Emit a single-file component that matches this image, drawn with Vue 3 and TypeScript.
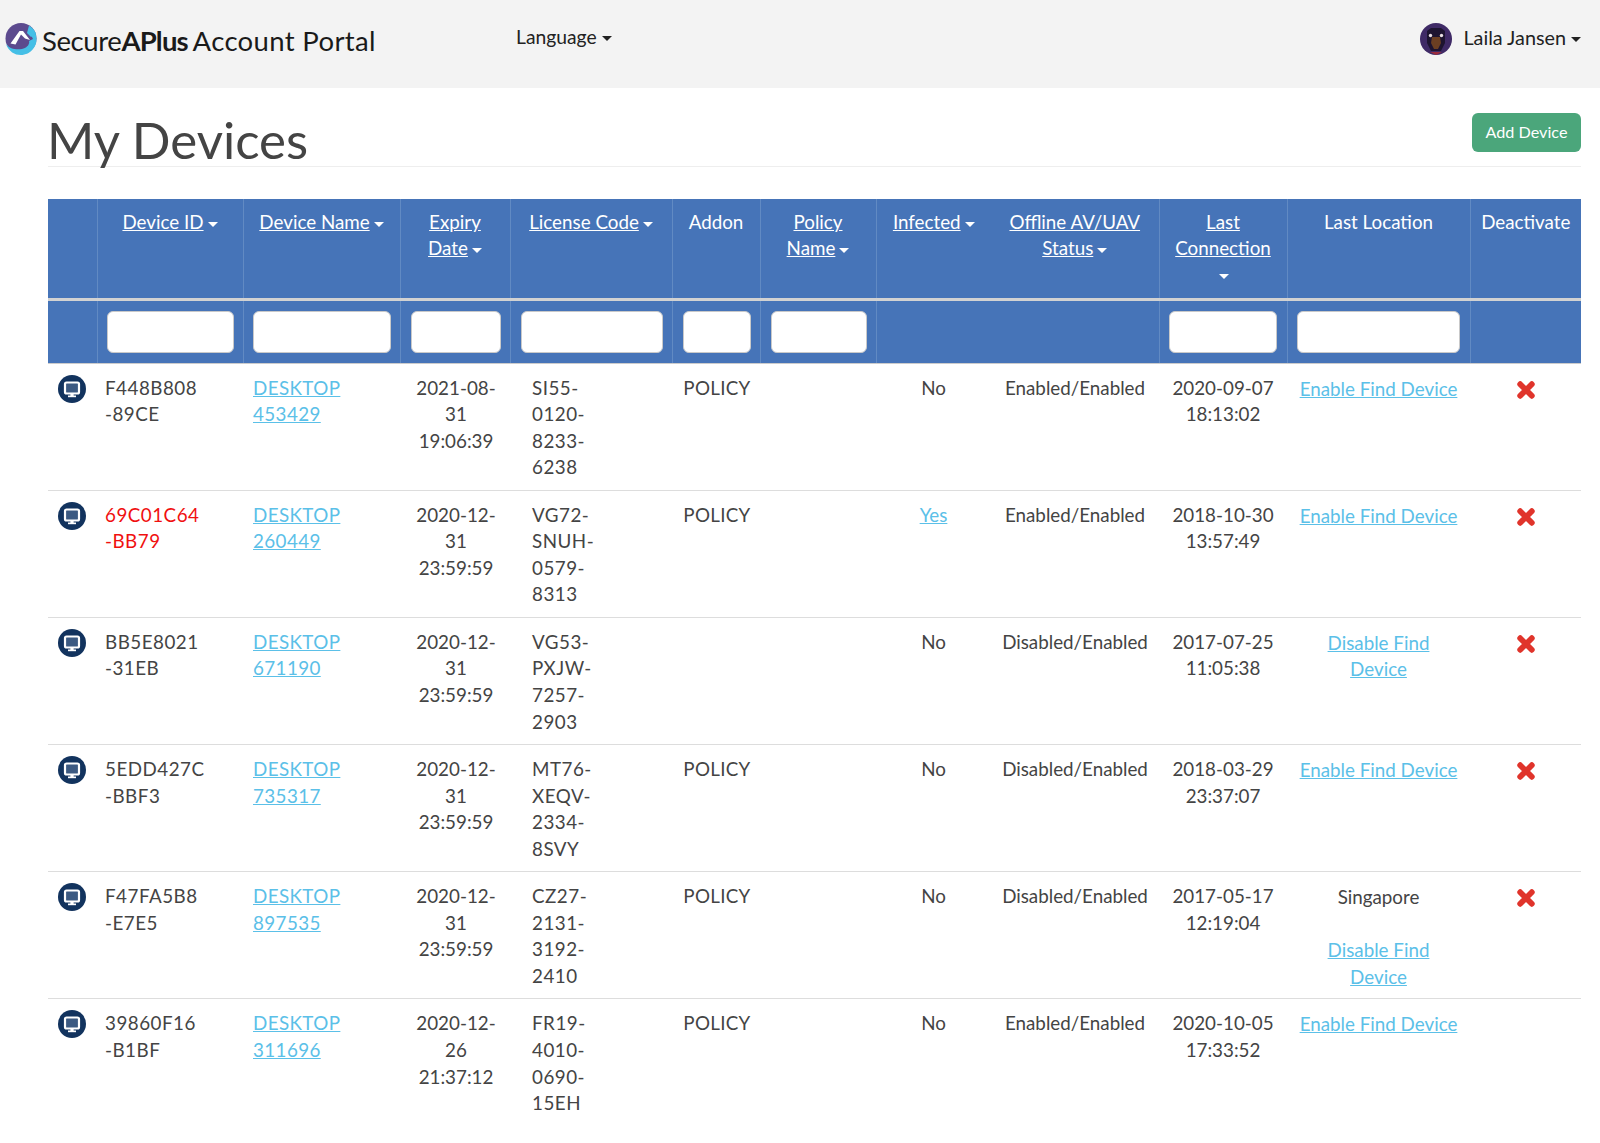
<script setup lang="ts">
interface Col { lines: string[]; sort: boolean; caretBlock?: boolean; width: number; filter: boolean; noLine?: boolean }
interface Row { id: string; red?: boolean; name: string; expiry: string; code: string; addon: string; infected: string; status: string; last: string; city?: string; find: string; canRemove: boolean }

const cols: Col[] = [
  { lines: [], sort: false, width: 49, filter: false, noLine: true },
  { lines: ['Device ID'], sort: true, width: 146, filter: true },
  { lines: ['Device Name'], sort: true, width: 157, filter: true },
  { lines: ['Expiry', 'Date'], sort: true, width: 110, filter: true },
  { lines: ['License Code'], sort: true, width: 162, filter: true },
  { lines: ['Addon'], sort: false, width: 88, filter: true },
  { lines: ['Policy', 'Name'], sort: true, width: 116, filter: true },
  { lines: ['Infected'], sort: true, width: 115, filter: false },
  { lines: ['Offline AV/UAV', 'Status'], sort: true, width: 168, filter: false, noLine: true },
  { lines: ['Last', 'Connection'], sort: true, caretBlock: true, width: 128, filter: true },
  { lines: ['Last Location'], sort: false, width: 183, filter: true },
  { lines: ['Deactivate'], sort: false, width: 111, filter: false },
]

const rows: Row[] = [
  { id: 'F448B808\n-89CE', name: 'DESKTOP\n453429', expiry: '2021-08-\n31\n19:06:39', code: 'SI55-\n0120-\n8233-\n6238', addon: 'POLICY', infected: 'No', status: 'Enabled/Enabled', last: '2020-09-07\n18:13:02', find: 'Enable Find Device', canRemove: true },
  { id: '69C01C64\n-BB79', red: true, name: 'DESKTOP\n260449', expiry: '2020-12-\n31\n23:59:59', code: 'VG72-\nSNUH-\n0579-\n8313', addon: 'POLICY', infected: 'Yes', status: 'Enabled/Enabled', last: '2018-10-30\n13:57:49', find: 'Enable Find Device', canRemove: true },
  { id: 'BB5E8021\n-31EB', name: 'DESKTOP\n671190', expiry: '2020-12-\n31\n23:59:59', code: 'VG53-\nPXJW-\n7257-\n2903', addon: '', infected: 'No', status: 'Disabled/Enabled', last: '2017-07-25\n11:05:38', find: 'Disable Find\nDevice', canRemove: true },
  { id: '5EDD427C\n-BBF3', name: 'DESKTOP\n735317', expiry: '2020-12-\n31\n23:59:59', code: 'MT76-\nXEQV-\n2334-\n8SVY', addon: 'POLICY', infected: 'No', status: 'Disabled/Enabled', last: '2018-03-29\n23:37:07', find: 'Enable Find Device', canRemove: true },
  { id: 'F47FA5B8\n-E7E5', name: 'DESKTOP\n897535', expiry: '2020-12-\n31\n23:59:59', code: 'CZ27-\n2131-\n3192-\n2410', addon: 'POLICY', infected: 'No', status: 'Disabled/Enabled', last: '2017-05-17\n12:19:04', city: 'Singapore', find: 'Disable Find\nDevice', canRemove: true },
  { id: '39860F16\n-B1BF', name: 'DESKTOP\n311696', expiry: '2020-12-\n26\n21:37:12', code: 'FR19-\n4010-\n0690-\n15EH', addon: 'POLICY', infected: 'No', status: 'Enabled/Enabled', last: '2020-10-05\n17:33:52', find: 'Enable Find Device', canRemove: false },
]
</script>

<template>
  <div class="page">
    <nav class="navbar">
      <div class="brand">
        <svg class="logo" viewBox="0 0 32 33" aria-hidden="true">
          <circle cx="16" cy="15.500" r="15.500" fill="#5c4a8e" />
          <path d="M1 21 C5 26 11 27 17 26 C22 25 25 21 24 18 L28 16 L26 12 L30 9 C32 14 32.500 21 28 26 C22 34.500 6 35 1 21 Z" fill="#45bfe6" />
          <path d="M24 2.500 C28 5 30 8 31 11 L26 14 L22 10 Z" fill="#45bfe6" />
          <path d="M5.500 20.500 L14.500 8 L18 8 L25 17 L20 15.500 L16 11.500 L10.500 21.500 Z" fill="#fff" />
        </svg>
        <span class="brand-text">Secure<b>APlus</b> <span class="portal">Account Portal</span></span>
      </div>
      <a class="nav-link lang">Language<i class="caret dark"></i></a>
      <div class="user">
        <svg class="avatar" viewBox="0 0 32 32" aria-hidden="true">
          <circle cx="16" cy="16" r="16" fill="#3f2a66" />
          <path d="M7 8 L11 5 L21 5 L25 8 L25 20 L21 28 L11 28 L7 20 Z" fill="#1d1430" />
          <path d="M12 14 L20 14 L21 20 L18 26 L14 26 L11 20 Z" fill="#6b3f22" />
          <circle cx="10.500" cy="12.500" r="1.700" fill="#e8dfe2" />
          <circle cx="21.500" cy="12.500" r="1.700" fill="#e8dfe2" />
          <path d="M10 29 L22 29 L16 32 Z" fill="#9c2b3c" />
        </svg>
        <a class="nav-link user-name">Laila Jansen<i class="caret dark"></i></a>
      </div>
    </nav>

    <main class="content">
      <header class="page-head">
        <h1>My Devices</h1>
        <button class="add" type="button">Add Device</button>
      </header>

      <table class="devices">
        <colgroup>
          <col v-for="(c, i) in cols" :key="i" :style="{ width: c.width + 'px' }" />
        </colgroup>
        <thead>
          <tr class="labels">
            <th v-for="(c, i) in cols" :key="i" :class="{ 'no-line': c.noLine }">
              <template v-if="c.sort">
                <template v-for="(l, j) in c.lines" :key="j">
                  <a>{{ l }}</a><i v-if="j === c.lines.length - 1 && !c.caretBlock" class="caret"></i><br v-if="j < c.lines.length - 1" />
                </template>
                <span v-if="c.caretBlock" class="caret-line"><i class="caret solo"></i></span>
              </template>
              <template v-else>{{ c.lines.join(' ') }}</template>
            </th>
          </tr>
          <tr class="filters">
            <th v-for="(c, i) in cols" :key="i" :class="{ 'no-line': c.noLine }">
              <input v-if="c.filter" type="text" :aria-label="c.lines.join(' ')" />
            </th>
          </tr>
        </thead>
        <tbody>
          <tr v-for="r in rows" :key="r.id">
            <td class="icon-cell">
              <svg class="device-icon" viewBox="0 0 28 28" aria-hidden="true">
                <circle cx="14" cy="14" r="14" fill="#12335e" />
                <rect x="7" y="7.500" width="14" height="11" rx="1.500" fill="#3c5a82" stroke="#fff" stroke-width="2.200" />
                <rect x="12.400" y="18.500" width="3.200" height="2.500" fill="#fff" />
                <rect x="10" y="20.500" width="8" height="1.700" fill="#fff" />
              </svg>
            </td>
            <td class="pre dev-id" :class="{ red: r.red }">{{ r.id }}</td>
            <td class="pre"><a class="link dev-name">{{ r.name }}</a></td>
            <td class="pre center nudge">{{ r.expiry }}</td>
            <td class="pre code">{{ r.code }}</td>
            <td class="center addon nudge">{{ r.addon }}</td>
            <td></td>
            <td class="center"><a v-if="r.infected === 'Yes'" class="link">Yes</a><template v-else>{{ r.infected }}</template></td>
            <td class="center">{{ r.status }}</td>
            <td class="pre center">{{ r.last }}</td>
            <td class="pre center loc">
              <template v-if="r.city">{{ r.city }}<br /><br /></template><a class="link">{{ r.find }}</a>
            </td>
            <td class="center icon-cell">
              <svg v-if="r.canRemove" class="remove" viewBox="0 0 18 18" aria-hidden="true">
                <path d="M3.200 3.200 L14.800 14.800 M14.800 3.200 L3.200 14.800" stroke="#e0342b" stroke-width="5.800" stroke-linecap="round" fill="none" />
              </svg>
            </td>
          </tr>
        </tbody>
      </table>
    </main>
  </div>
</template>

<style>
html, body { margin: 0; background: #fff; }
</style>

<style scoped>
.page {
  font-family: Lato, "Open Sans", sans-serif;
  color: #444;
  font-size: 18.800px;
  line-height: 26.550px;
}
.navbar {
  height: 88px;
  background: #f3f3f3;
  display: flex;
  align-items: center;
  padding: 0 19px 14px 5px;
  box-sizing: border-box;
}
.brand { display: flex; align-items: center; width: 511px; }
.logo { width: 32px; height: 33px; margin-right: 5px; margin-top: 5px; }
.brand-text { font-size: 27.500px; color: #1a1a1a; margin-top: 8px; letter-spacing: -0.400px; white-space: pre; word-spacing: -2px; }
.brand-text b { font-weight: 700; letter-spacing: -0.800px; }
.portal { letter-spacing: 0.350px; word-spacing: 0; }
.nav-link { color: #222; font-size: 19.300px; }
.user-name { font-size: 19.800px; }
.lang { flex: 1; }
.user { display: flex; align-items: center; gap: 11px; }
.avatar { width: 32px; height: 32px; margin-top: 4px; }
.caret {
  display: inline-block;
  width: 0;
  height: 0;
  margin-left: 4px;
  vertical-align: middle;
  border-top: 5px solid #fff;
  border-left: 5px solid transparent;
  border-right: 5px solid transparent;
}
.caret.dark { border-top-color: #222; margin-left: 5px; }
.caret.solo { margin-left: 2px; }
.caret-line { display: block; }
.content { padding: 0 19px 17px 48px; }
.page-head {
  height: 78px;
  border-bottom: 1px solid #eee;
  display: flex;
  justify-content: space-between;
  align-items: flex-start;
  margin-bottom: 32px;
}
h1 {
  margin: 26px 0 0 -1px;
  font-size: 51px;
  line-height: 52px;
  font-weight: 400;
  color: #444;
}
.add {
  margin-top: 25px;
  width: 109px;
  height: 39px;
  background: #4ba67b;
  border: none;
  border-radius: 6px;
  color: #fff;
  font: 400 16.200px Lato, sans-serif;
  padding: 0 0 2px;
}
.devices {
  table-layout: fixed;
  border-collapse: collapse;
  width: 1533px;
}
.labels th {
  background: #4674b8;
  color: #fff;
  font-weight: 400;
  line-height: 26px;
  text-align: center;
  vertical-align: top;
  padding: 10px 5px 10.500px;
  border-left: 1px solid #618ac3;
  border-bottom: 3px solid #d2d2d2;
  white-space: nowrap;
}
.labels th a { text-decoration: underline; }
.filters th {
  background: #4674b8;
  padding: 10px 9px;
  height: 42px;
  border-left: 1px solid #618ac3;
  border-bottom: 1px solid #ccc;
}
.filters th:nth-child(n+4) { padding-left: 10px; }
.filters th:nth-child(n+10) { padding-left: 9px; padding-right: 10px; }
.labels th.no-line, .filters th.no-line { border-left: none; }
.filters input {
  display: block;
  box-sizing: border-box;
  width: 100%;
  height: 42px;
  border: 1px solid #c9c9c9;
  border-radius: 6px;
  background: #fff;
  padding: 0;
}
td {
  padding: 11px 10px 9px;
  vertical-align: top;
  border-bottom: 1px solid #ddd;
  height: 106px;
}
tbody tr:last-child td { border-bottom: none; }
.pre { white-space: pre-line; }
.center { text-align: center; }
.nudge { padding-left: 11px; padding-right: 9px; }
.dev-id { padding-left: 8px; letter-spacing: 0.500px; }
.red { color: #f01010; }
.code { padding-left: 22px; letter-spacing: 0.500px; }
.addon { letter-spacing: 0.300px; }
.link { color: #5bc0e8; text-decoration: underline; }
.dev-name { letter-spacing: 0.400px; }
.loc { padding-top: 12px; padding-bottom: 8px; }
.device-icon { display: block; width: 28px; height: 28px; }
.remove { display: block; width: 18px; height: 18px; margin: 6px auto 0; }
</style>
